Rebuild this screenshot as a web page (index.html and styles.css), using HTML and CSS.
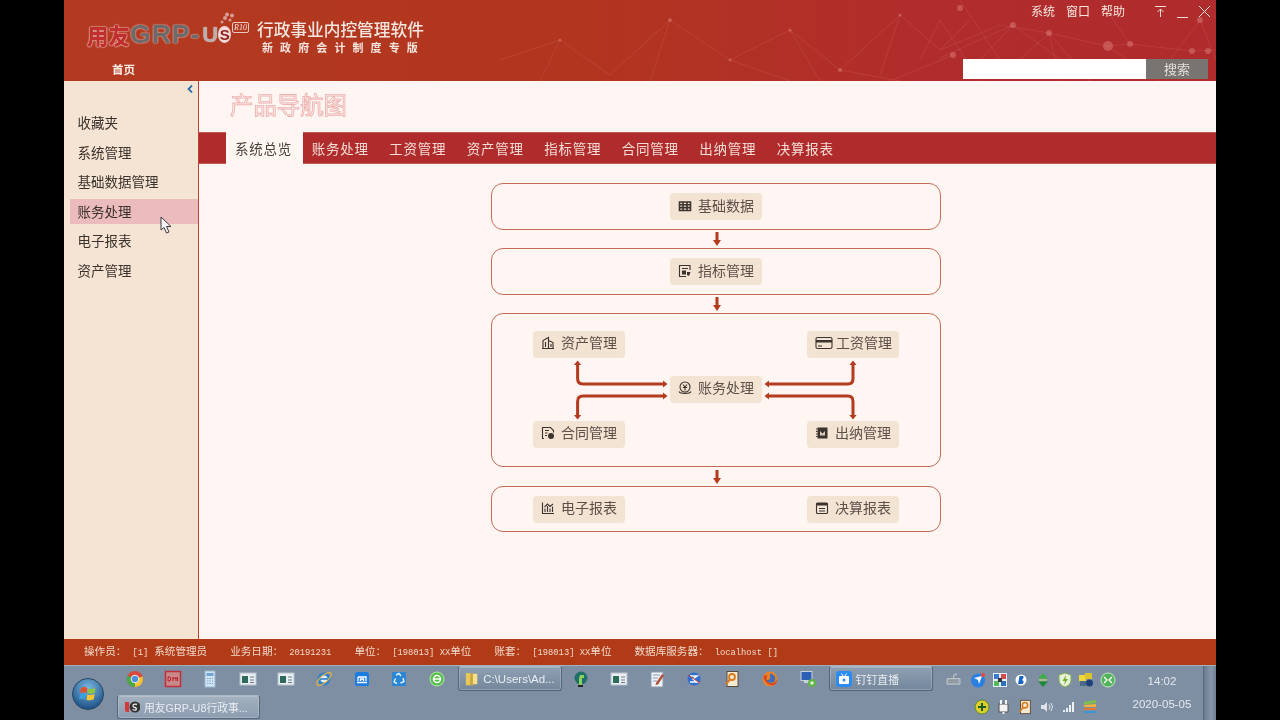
FILE: index.html
```html
<!DOCTYPE html>
<html lang="zh">
<head>
<meta charset="utf-8">
<title>用友GRP-U8</title>
<link rel="stylesheet" href="styles.css">
</head>
<body>
<div class="screen">
  <header class="header">
    <svg class="net" viewBox="0 0 716 81" aria-hidden="true">
      <g class="net-lines">
        <path d="M0 60 L60 40 L110 75 L170 20 L230 60 L290 30 L340 70 L400 15 L440 50 L500 25 L549 33 L590 81 L513 25 L470 70"/>
        <path d="M60 40 L40 81 M170 20 L150 81 M230 60 L290 81 M290 30 L320 81 M340 70 L400 81 M400 15 L380 75 M440 50 L470 20 M440 58 L513 25 M549 33 L520 60 M549 33 L560 81"/>
        <path d="M549 33 L607 46 L630 44 L692 51 L716 50 M700 20 L670 60 M700 20 L716 60 M460 0 L500 60 M630 44 L600 0 M607 46 L660 81 M420 60 L440 20 L480 81 M453 55 L390 81"/>
      </g>
      <g class="net-dots">
        <circle cx="60" cy="40" r="1.5"/><circle cx="170" cy="20" r="2"/><circle cx="230" cy="60" r="1.5"/><circle cx="290" cy="30" r="1.5"/><circle cx="340" cy="70" r="2"/><circle cx="400" cy="15" r="1.5"/><circle cx="460" cy="8" r="3"/><circle cx="453" cy="55" r="3"/><circle cx="513" cy="25" r="3"/><circle cx="549" cy="33" r="3"/><circle cx="608" cy="46" r="5"/><circle cx="630" cy="44" r="3"/><circle cx="700" cy="20" r="3"/><circle cx="692" cy="51" r="3"/><circle cx="708" cy="51" r="3"/>
      </g>
    </svg>
    <div class="header-top">
      <div class="brand">
        <div class="logo">
          <span class="logo-cn">用友</span><span class="logo-en">GRP-</span><span class="logo-u">U</span><span class="logo-s">S</span><span class="logo-r">R10</span>
          <svg class="logo-dots" width="16" height="12" viewBox="0 0 16 12" aria-hidden="true"><circle cx="3" cy="10" r="1.500"/><circle cx="6" cy="6" r="2"/><circle cx="8" cy="2.500" r="2"/><circle cx="13" cy="3.500" r="2"/><circle cx="11" cy="8" r="1.500"/></svg>
        </div>
        <div class="brand-text">
          <div class="brand-main">行政事业内控管理软件</div>
          <div class="brand-sub">新政府会计制度专版</div>
        </div>
      </div>
      <div class="sysmenu">
        <span>系统</span><span>窗口</span><span>帮助</span>
        <div class="winctl">
          <svg width="13" height="13" viewBox="0 0 13 13"><path d="M1 1.500H12M6.500 12V4M3.500 7L6.500 4L9.500 7"/></svg>
          <svg width="13" height="13" viewBox="0 0 13 13"><path d="M1 12.500H12"/></svg>
          <svg width="13" height="13" viewBox="0 0 13 13"><path d="M1 1L12 12M12 1L1 12"/></svg>
        </div>
      </div>
    </div>
    <div class="header-nav">
      <span class="home">首页</span>
      <div class="search"><div class="search-input"></div><div class="search-btn">搜索</div></div>
    </div>
  </header>

  <main class="body">
    <aside class="sidebar">
      <div class="collapse"><svg width="6" height="8" viewBox="0 0 6 8"><path d="M5 .5L1.500 4L5 7.500"/></svg></div>
      <ul class="menu">
        <li>收藏夹</li>
        <li>系统管理</li>
        <li>基础数据管理</li>
        <li class="active">账务处理</li>
        <li>电子报表</li>
        <li>资产管理</li>
      </ul>
    </aside>

    <section class="content">
      <h1 class="title">产品导航图</h1>
      <nav class="tabs">
        <span class="tab current">系统总览</span>
        <span class="tab">账务处理</span>
        <span class="tab">工资管理</span>
        <span class="tab">资产管理</span>
        <span class="tab">指标管理</span>
        <span class="tab">合同管理</span>
        <span class="tab">出纳管理</span>
        <span class="tab">决算报表</span>
      </nav>

      <div class="flow">
        <div class="box single">
          <div class="chip"><svg class="ic" viewBox="0 0 14 14"><path d="M1.500 3H12.500V11.500H1.500ZM1.500 5.800H12.500M1.500 8.600H12.500M5 3V11.500M9 3V11.500" stroke-width="1.600"/></svg><span>基础数据</span></div>
        </div>
        <div class="down"><svg width="8" height="14" viewBox="0 0 8 14"><path d="M2.500 0H5.500V8H8L4 14L0 8H2.500Z"/></svg></div>
        <div class="box single">
          <div class="chip"><svg class="ic" viewBox="0 0 14 14"><path d="M12 6V1.500H1.500V12.500H8M4 4.500H10"/><path class="solid" d="M4 6.500H8V10.500H4ZM9 8L12.500 8L11 12L9 11Z"/></svg><span>指标管理</span></div>
        </div>
        <div class="down"><svg width="8" height="14" viewBox="0 0 8 14"><path d="M2.500 0H5.500V8H8L4 14L0 8H2.500Z"/></svg></div>
        <div class="box hub">
          <svg class="links" viewBox="0 0 450 154" aria-hidden="true">
            <path class="link" d="M174 71H92Q86.600 71 86.600 65.500V50"/>
            <path class="link" d="M174 83H92Q86.600 83 86.600 88.500V104"/>
            <path class="link" d="M276 71H357Q362 71 362 65.500V50"/>
            <path class="link" d="M276 83H357Q362 83 362 88.500V104"/>
            <path class="head" d="M172 67.500L176.500 71L172 74.500ZM172 79.500L176.500 83L172 86.500ZM278 67.500L273.500 71L278 74.500ZM278 79.500L273.500 83L278 86.500ZM83 52L86.600 47.500L90.200 52ZM83 102L86.600 106.500L90.200 102ZM358.400 52L362 47.500L365.600 52ZM358.400 102L362 106.500L365.600 102Z"/>
          </svg>
          <div class="chip"><svg class="ic" viewBox="0 0 14 14"><path d="M2 12.500V4.500L7.500 1.500V12.500M7.500 4.500L12 6.500V12.500M1 12.500H13M4.500 6V11M10 8V11"/></svg><span>资产管理</span></div>
          <div class="gap"></div>
          <div class="chip"><svg class="ic wide" viewBox="0 0 18 14"><rect x="1" y="1.500" width="16" height="11" rx="1.500"/><path class="solid" d="M1 4H17V6.500H1Z"/><path d="M3 10H7"/></svg><span class="tight">工资管理</span></div>
          <div class="gap"></div>
          <div class="chip"><svg class="ic" viewBox="0 0 14 14"><circle cx="7" cy="6" r="5"/><path d="M5 3.500L7 6L9 3.500M4.800 6.500H9.200M7 6V9.500M1 10.500C2 13 12 13 13 10.500"/></svg><span>账务处理</span></div>
          <div class="gap"></div>
          <div class="chip"><svg class="ic" viewBox="0 0 14 14"><path d="M3 12.500H1.500V1.500H9.500L12.500 4.500V6.500M4 4.500H8M4 7H6.500M4 9.500H6"/><circle class="solid" cx="10" cy="10" r="3"/></svg><span>合同管理</span></div>
          <div class="gap"></div>
          <div class="chip"><svg class="ic" viewBox="0 0 14 14"><path class="solid" d="M2.500 1.500H12.500V12.500H2.500Z"/><path class="thin-light" d="M5 5L7.500 7.500L10 5V9.500H5Z"/><path d="M1 3H2.500M1 5.500H2.500M1 8H2.500M1 10.500H2.500"/></svg><span>出纳管理</span></div>
        </div>
        <div class="down last"><svg width="8" height="14" viewBox="0 0 8 14"><path d="M2.500 0H5.500V8H8L4 14L0 8H2.500Z"/></svg></div>
        <div class="box pair">
          <div class="chip"><svg class="ic" viewBox="0 0 14 14"><path d="M1.500 1.500V12.500H13M4 11V7.500M6.500 11V5M9 11V7.500M11.500 11V5.500M3.500 6L6.500 3L9 5.500L12 3"/></svg><span>电子报表</span></div>
          <div class="chip"><svg class="ic" viewBox="0 0 14 14"><rect x="1.500" y="2" width="11" height="10.500" rx="1"/><path class="solid" d="M1.500 2H12.500V4.500H1.500Z"/><path d="M4 7.500H10M4 10H10"/></svg><span>决算报表</span></div>
        </div>
      </div>
    </section>
  </main>

  <footer class="status">
    <span>操作员：<i class="mid">[1]</i>系统管理员</span>
    <span>业务日期：<i>20191231</i></span>
    <span>单位：<i>[198013] XX</i>单位</span>
    <span>账套：<i>[198013] XX</i>单位</span>
    <span>数据库服务器：<i>localhost []</i></span>
  </footer>

  <div class="taskbar">
    <div class="start">
      <svg class="orb" width="32" height="32" viewBox="0 0 32 32">
        <defs><radialGradient id="orbfill" cx=".5" cy=".3" r=".8"><stop offset="0" stop-color="#7ab8e0"/><stop offset="1" stop-color="#0c3f78"/></radialGradient></defs>
        <circle cx="16" cy="16" r="15.500" fill="url(#orbfill)" stroke="#2c4660"/>
        <path d="M9 10Q12 8 15.300 10L14.500 15Q11.500 13.500 8.200 15Z" fill="#e0502a"/>
        <path d="M16.300 10.500Q20 12 23.500 9.500L22.800 14.800Q19 16.500 15.500 15.300Z" fill="#8dc63f"/>
        <path d="M8 16.200Q11.500 14.800 14.300 16.300L13.500 21.500Q10.500 19.800 7.200 21.300Z" fill="#3aa0e0"/>
        <path d="M15.300 16.500Q19 17.800 22.600 16L21.800 21.300Q18 23 14.500 21.700Z" fill="#f8c52c"/>
      </svg>
    </div>
    <div class="task-main">
      <div class="task-row">
        <span class="qi"><svg viewBox="0 0 18 18"><circle cx="9" cy="9" r="8" fill="#d8483a"/><path d="M9 9L16.500 6.500A8 8 0 0 1 9 17Z" fill="#f4c430"/><path d="M9 9L9 17A8 8 0 0 1 1.500 5.500Z" fill="#4da64a"/><circle cx="9" cy="9" r="3.800" fill="#4a8fdc" stroke="#eee"/></svg></span>
        <span class="qi"><svg viewBox="0 0 18 18"><rect x="1.500" y="1.500" width="15" height="15" fill="#c9898a" stroke="#c22f3a" stroke-width="1.500"/><path d="M4 11V7H6Q7.500 9 6 11ZM9 11V7L10.500 9L12 7V11M13.500 7V11" fill="none" stroke="#b8202a"/></svg></span>
        <span class="qi"><svg viewBox="0 0 18 18"><rect x="4" y="1" width="10" height="16" fill="#cfe4f5" stroke="#9db8d0"/><rect x="5.500" y="3" width="7" height="3" fill="#6fa6d8"/><path d="M6 8.500H12M6 11H12M6 13.500H12" stroke="#7ea5c8" stroke-dasharray="1.500 1"/></svg></span>
        <span class="qi"><svg viewBox="0 0 18 18"><use href="#winapp"/></svg></span>
        <span class="qi"><svg viewBox="0 0 18 18"><use href="#winapp"/></svg></span>
        <span class="qi"><svg viewBox="0 0 18 18"><ellipse cx="9" cy="9" rx="6.500" ry="6.500" fill="#2f80d0"/><circle cx="9" cy="9" r="3.500" fill="#e8f2fa"/><path d="M5 9H13" stroke="#2f80d0" stroke-width="1.600"/><ellipse cx="9" cy="9" rx="9" ry="3.500" transform="rotate(-40 9 9)" fill="none" stroke="#e5b53c" stroke-width="1.200"/></svg></span>
        <span class="qi"><svg viewBox="0 0 18 18"><rect x="2" y="2" width="14" height="14" rx="2.500" fill="#1c7ce0"/><path d="M5 7H13V11M5 7V11M7.500 11V9H10.500V11M4 12.500H14" fill="none" stroke="#fff" stroke-width="1.300"/></svg></span>
        <span class="qi"><svg viewBox="0 0 18 18"><rect x="2" y="2" width="14" height="14" rx="1" fill="#2b86d4"/><path d="M6 5L9 3.500L11 6M13 8L14 11.500L10.500 13M7 13.500L4 12L5.500 8.500" fill="none" stroke="#dff0fb" stroke-width="1.400"/></svg></span>
        <span class="qi"><svg viewBox="0 0 18 18"><circle cx="9" cy="9" r="7" fill="#55c04a" stroke="#b9e7b0"/><circle cx="9" cy="9" r="3.500" fill="none" stroke="#fff" stroke-width="1.500"/><path d="M5 9H13" stroke="#fff" stroke-width="1.500"/></svg></span>
        <div class="task-btn path"><svg viewBox="0 0 16 18" width="14" height="18"><path d="M1 2H6V16H1Z" fill="#e8c65a"/><path d="M6 3H14V15H6Z" fill="#f6e08c"/><path d="M6 2L9 3V17L6 16Z" fill="#caa33a"/></svg><span>C:\Users\Ad...</span></div>
        <span class="qi"><svg viewBox="0 0 18 18"><circle cx="9" cy="8" r="6.500" fill="#1f6f6a"/><path d="M8 5H12V8H10V15H7V8Z" fill="#8ccf5e"/><path d="M6 15H11V17H6Z" fill="#222"/></svg></span>
        <span class="qi"><svg viewBox="0 0 18 18"><use href="#winapp"/></svg></span>
        <span class="qi"><svg viewBox="0 0 18 18"><rect x="3" y="2" width="12" height="15" fill="#eef3f8" stroke="#8a9ab0"/><path d="M5 5H12M5 8H10M5 11H9" stroke="#8a9ab0"/><path d="M8 13L14 4L16 5.500L10 14.500L7.500 15Z" fill="#b0503a"/></svg></span>
        <span class="qi"><svg viewBox="0 0 18 18"><circle cx="9" cy="9" r="6.500" fill="#2f6fd0"/><path d="M5 6H12L8 9L12 12H5" fill="none" stroke="#fff" stroke-width="1.500"/><path d="M3 5L15 13" stroke="#c53a3a"/></svg></span>
        <span class="qi"><svg viewBox="0 0 18 18"><use href="#keydoc"/></svg></span>
        <span class="qi"><svg viewBox="0 0 18 18"><circle cx="9" cy="9" r="7.500" fill="#e8822a"/><path d="M9 3.500A5.500 5.500 0 0 1 14 11C11 14 6 13 5 9.500C6.500 10.500 9 10 9 8Z" fill="#3f6cb5"/><path d="M2.500 6C3 12 8 16 13 15C15 14 16.500 11 16.500 8.500C15.500 13 10 14.500 7 12C5 10 5 7 6.500 5Z" fill="#d8441f"/></svg></span>
        <span class="qi"><svg viewBox="0 0 18 18"><rect x="2" y="1.500" width="11" height="9" fill="#2d5fb5" stroke="#c8d2dc"/><rect x="5" y="11" width="5" height="2" fill="#c8d2dc"/><circle cx="13" cy="13" r="4" fill="#5fb545"/><path d="M11 13H15M13 11V15" stroke="#fff"/></svg></span>
        <div class="task-btn"><svg viewBox="0 0 16 16" width="16" height="16"><rect width="16" height="16" rx="3" fill="#2d8cf0"/><rect x="3" y="5" width="10" height="8" rx="1" fill="#fff"/><path d="M5.500 2.500L7 5M10.500 2.500L9 5" stroke="#fff"/><circle cx="8" cy="9" r="1.500" fill="#2d8cf0"/></svg><span>钉钉直播</span></div>
      </div>
      <div class="task-row second">
        <div class="task-btn app"><svg viewBox="0 0 16 16" width="16" height="16"><path d="M1 3H5V13H3Q1 13 1 11Z" fill="#d43a3a"/><circle cx="11" cy="8" r="5.500" fill="#333"/><path d="M13 5.500Q9 4.500 9 7Q9 8.500 11 8.500Q13 9 12 11Q10.500 11.500 8.500 10.500" fill="none" stroke="#eee" stroke-width="1.300"/></svg><span>用友GRP-U8行政事...</span></div>
      </div>
    </div>
    <div class="tray">
      <div class="tray-row">
        <span class="tk"><svg viewBox="0 0 16 14" width="15" height="13"><path d="M1 6H15V12H1ZM8 6V3Q8 1 12 1" fill="#9aa3ac" stroke="#c2c8ce"/><path d="M3 8H13M3 10H13" stroke="#7d8790" stroke-dasharray="1 1"/></svg></span>
        <span class="ti"><svg viewBox="0 0 16 16"><circle cx="8" cy="8.500" r="7" fill="#2a7fe0"/><path d="M4 6L12 4L9 12L8 8Z" fill="#fff"/><circle cx="13" cy="3" r="2" fill="#e8453c"/></svg></span>
        <span class="ti"><svg viewBox="0 0 16 16"><rect x="1" y="1" width="14" height="14" fill="#e8eef5"/><rect x="2" y="2" width="5" height="5" fill="#3a7ad8"/><rect x="9" y="2" width="5" height="5" fill="#d84a4a"/><rect x="2" y="9" width="5" height="5" fill="#4fbf5a"/><rect x="9" y="9" width="5" height="5" fill="#2d6fb8"/><rect x="6" y="6" width="4" height="4" fill="#333"/></svg></span>
        <span class="ti"><svg viewBox="0 0 16 16"><circle cx="8" cy="8" r="5.500" fill="#fff"/><path d="M5 12L6.500 4H10Q11.500 5.500 9 8Q12 9 9.500 12Z" fill="#1a62c8"/></svg></span>
        <span class="ti"><svg viewBox="0 0 16 16"><path d="M8 1L13 6.500H3Z" fill="#3eb04a"/><path d="M8 15L13 9.500H3Z" fill="#1d8a3a"/><path d="M4 7.500H12V8.500H4Z" fill="#d9e36a"/></svg></span>
        <span class="ti"><svg viewBox="0 0 16 16"><path d="M8 1L14 3V8Q14 13 8 15Q2 13 2 8V3Z" fill="#e8f0d8" stroke="#7eb050"/><path d="M9 3L5.500 9H8L7 13L11 7H8.500Z" fill="#6cb030"/></svg></span>
        <span class="ti"><svg viewBox="0 0 16 16"><rect x="1" y="3" width="7" height="6" fill="#f0d83a"/><rect x="7" y="1" width="7" height="6" fill="#dcc22c"/><rect x="2" y="9" width="6" height="5" fill="#4c6a8a"/><circle cx="11.500" cy="11" r="3.500" fill="#1f3f7a"/></svg></span>
        <span class="ti"><svg viewBox="0 0 16 16"><circle cx="8" cy="8" r="7" fill="#52b45a" stroke="#c3e6c2"/><path d="M4 5L7 8L4 11M12 5L9 8L12 11" fill="none" stroke="#fff" stroke-width="1.300"/></svg></span>
      </div>
      <div class="tray-row second-tray">
        <span class="ti"><svg viewBox="0 0 16 16"><circle cx="8" cy="8" r="7" fill="#dccf2c" stroke="#5a8a2c"/><path d="M8 4V12M4 8H12" stroke="#1f5a2a" stroke-width="2"/></svg></span>
        <span class="ti"><svg viewBox="0 0 16 16"><rect x="3" y="5" width="9" height="8" fill="#f2f2f2" stroke="#555"/><path d="M5 5V1M10 5V1M7.500 13V15" stroke="#f2f2f2" stroke-width="2"/></svg></span>
        <span class="ti"><svg viewBox="0 0 16 16"><use href="#keydoc"/></svg></span>
        <span class="ti"><svg viewBox="0 0 16 16"><path d="M2 6H5L8 3V13L5 10H2Z" fill="#dfe4ea"/><path d="M10 5.500Q12 8 10 10.500M12 4Q15 8 12 12" fill="none" stroke="#dfe4ea"/></svg></span>
        <span class="ti"><svg viewBox="0 0 16 16"><path d="M2 13V11H4V13ZM5 13V9H7V13ZM8 13V6H10V13ZM11 13V3H13V13Z" fill="#eef1f4"/></svg></span>
        <span class="ti"><svg viewBox="0 0 16 16"><path d="M2 3L14 1V4L2 5.500Z" fill="#7fc04a"/><path d="M2 6L14 5V8H2Z" fill="#eeb23a"/><path d="M2 9H14V11H2Z" fill="#e0783a"/><path d="M2 12H14V14H2Z" fill="#3a96d8"/></svg></span>
      </div>
    </div>
    <div class="clock"><span>14:02</span><span>2020-05-05</span></div>
    <div class="show-desktop"></div>
  </div>

  <svg class="cursor" width="13" height="18" viewBox="0 0 13 18"><path d="M1 1V14L4 11.500L6.500 17L9 16L6.500 10.500H11Z" fill="#f4f4f4" stroke="#3a3a4a"/></svg>

  <svg class="defs" width="0" height="0" aria-hidden="true">
    <symbol id="winapp" viewBox="0 0 18 18"><rect x="1" y="3" width="16" height="12" fill="#e9eef2" stroke="#b8c2cc"/><rect x="3" y="6" width="6" height="7" fill="#2c6a5a"/><path d="M11 7H15M11 10H15M11 12.500H15" stroke="#6a7a88"/></symbol>
    <symbol id="keydoc" viewBox="0 0 18 18"><rect x="4" y="1.500" width="11" height="15" fill="#f5ead0" stroke="#5a4a3a"/><circle cx="9" cy="7" r="3" fill="none" stroke="#d87a20" stroke-width="1.800"/><path d="M7 9.500L3 14" stroke="#d87a20" stroke-width="2"/></symbol>
  </svg>
</div>
</body>
</html>
```
FILE: styles.css
```css
* { box-sizing: border-box; }
html, body { margin: 0; padding: 0; height: 100%; background: #000; overflow: hidden; }
body { font-family: "Noto Sans CJK SC", "Liberation Sans", sans-serif; }

.screen {
  position: relative;
  width: 1152px;
  height: 720px;
  margin-left: 64px;
  display: flex;
  flex-direction: column;
  filter: blur(0.35px);
}

/* header */
.header {
  position: relative;
  height: 81px;
  flex: none;
  background: linear-gradient(90deg, #b33a20 0%, #b2351f 45%, #b12c2c 75%, #b02b2c 100%);
  color: #f4e6df;
}
.net { position: absolute; right: 0; top: 0; width: 716px; height: 81px; }
.net-lines path { fill: none; stroke: rgba(255, 190, 180, .11); stroke-width: 1; }
.net-dots circle { fill: rgba(255, 190, 180, .28); }

.header-top { position: relative; height: 58px; display: flex; justify-content: space-between; align-items: flex-start; }
.brand { display: flex; padding: 12px 0 0 23px; }
.logo { width: 170px; height: 36px; display: flex; align-items: center; padding-top: 9px; font-family: "Liberation Sans", sans-serif; font-weight: 700; position: relative; white-space: nowrap; }
.logo-cn { font-family: "Noto Sans CJK SC", sans-serif; font-size: 21.500px; font-weight: 900; color: #c02e2e; text-shadow: 0 0 1.500px #fbe3dc, 0 0 1.500px #fbe3dc; line-height: 1; }
.logo-en { font-size: 26.500px; letter-spacing: 1px; color: #6f6a69; -webkit-text-stroke: .3px #6f6a69; text-shadow: 0 0 1.500px #f6cfc6, 0 0 1.500px #f6cfc6; line-height: 1; }
.logo-u { margin-left: 2px; font-size: 22px; color: #b9b0ae; text-shadow: 0 0 1px #f6cfc6; line-height: 1; }
.logo-s { width: 13px; height: 17px; border-radius: 50%; background: #f2dada; color: #8f2222; font-size: 15px; line-height: 17px; text-align: center; }
.logo-r { position: absolute; left: 145px; top: 10px; padding: 0 1px; border: 1px solid #e8c8c0; border-radius: 2px; font: italic 8px/9px "Liberation Serif", serif; color: #f4e6df; }
.logo-dots { position: absolute; left: 132px; top: 0; fill: #d89c94; }
.brand-text { padding-top: 5px; }
.brand-main { font-size: 16.700px; font-weight: 500; line-height: 24px; white-space: nowrap; }
.brand-sub { padding-left: 5px; font-size: 11px; font-weight: 700; letter-spacing: 7.100px; line-height: 13px; white-space: nowrap; }

.sysmenu { display: flex; align-items: center; gap: 11px; font-size: 12px; line-height: 20px; padding-top: 1px; padding-right: 5px; }
.winctl { display: flex; gap: 9px; margin-left: 18px; }
.winctl svg { fill: none; stroke: #f0dcd6; stroke-width: 1; }

.header-nav { position: relative; height: 23px; display: flex; justify-content: space-between; align-items: flex-start; padding: 1px 8px 0 48px; }
.home { font-size: 11.500px; font-weight: 700; line-height: 20px; color: #f8ece6; }
.search { display: flex; height: 20px; }
.search-input { width: 183px; background: #fff; }
.search-btn { width: 62px; background: #787472; color: #e2dedc; font-size: 13px; line-height: 19px; text-align: center; }

/* body */
.body { flex: 1; min-height: 0; display: flex; background: #fff5f3; }
.sidebar { width: 135px; flex: none; background: #f5e3d3; border-right: 1px solid #b5472f; }
.collapse { height: 25px; display: flex; justify-content: flex-end; padding: 4px 5px 0 0; }
.collapse svg { fill: none; stroke: #2a6fa8; stroke-width: 1.800; }
.menu { list-style: none; margin: 0 0 0 6px; padding: 4px 0 0; }
.menu li { height: 25px; margin-bottom: 4.600px; padding-left: 7.500px; font-size: 13.500px; line-height: 24px; color: #3a322c; }
.menu li.active { background: #ecbcbc; }

.content { flex: 1; min-width: 0; display: flex; flex-direction: column; }
.title {
  height: 51px;
  margin: 0;
  padding-left: 31px;
  font-size: 23.400px;
  line-height: 46px;
  font-weight: 400;
  color: #fff5f3;
  -webkit-text-stroke: .9px #edb4b0;
}
.tabs { height: 32px; flex: none; display: flex; padding-left: 27px; background: #b02c2c; border-top: 1px solid #c05a55; border-bottom: 1px solid #c25c58; }
.tab { width: 77.500px; padding-right: 3px; text-align: center; font-size: 13.500px; letter-spacing: .7px; line-height: 31px; color: #f3dcd6; white-space: nowrap; }
.tab.current { background: #fff5f3; color: #4a4038; margin: -1px 0 -1px; padding-right: 2px; line-height: 33px; width: 77px; }

/* diagram */
.flow { width: 450px; margin: 19px 0 0 292px; }
.box { position: relative; border: 1.300px solid #c46c58; border-radius: 12px; display: grid; grid-template-columns: repeat(3, 92px); column-gap: 45px; justify-content: center; align-content: center; }
.box.single { height: 47px; grid-template-columns: 92px; }
.box.hub { height: 154px; padding-bottom: 1.300px; grid-template-rows: repeat(3, 27px); row-gap: 18px; }
.box.pair { height: 46px; grid-template-columns: 92px 92px; column-gap: 182px; }
.chip { position: relative; height: 27px; width: 92px; padding: 0 0 2px 8px; background: #f3e3d3; border-radius: 4px; display: flex; align-items: center; gap: 6px; color: #5c5049; font-size: 14px; white-space: nowrap; }
.chip span { margin-bottom: 2px; }
.chip span.tight { margin-left: -3px; }
.ic { width: 14px; height: 14px; flex: none; fill: none; stroke: #3b332e; stroke-width: 1.100; }
.ic.wide { width: 18px; }
.ic .solid { fill: #3b332e; stroke: none; }
.ic .thin-light { fill: #d9cabc; stroke: none; }

.down { height: 18px; padding-left: 2px; display: flex; justify-content: center; align-items: center; }
.down.last { height: 19px; }
.down svg { fill: #b33c1e; }

.links { position: absolute; left: -1.300px; top: -1.300px; width: 450px; height: 154px; }
.link { fill: none; stroke: #b33c1e; stroke-width: 3; }
.head { fill: #b33c1e; }

/* status */
.status { height: 26px; flex: none; padding: 0 0 3px 20px; display: flex; gap: 23px; align-items: center; background: #b23b17; color: #f0d9cc; font-size: 10.600px; white-space: nowrap; }
.status i { margin-left: 6px; font: 8.800px "Liberation Mono", monospace; }
.status i.mid { margin-right: 6px; }

/* taskbar */
.taskbar { height: 55px; flex: none; display: flex; background: #7e8fa3; border-top: 1px solid #a3b0bf; color: #e8edf2; }
.start { width: 48px; padding: 12px 0 0 8px; flex: none; }
.orb { display: block; }
.task-main { width: 824px; flex: none; }
.task-row { height: 28px; display: flex; align-items: flex-start; padding-left: 4px; }
.task-row.second { height: 27px; padding: 1px 0 0 5px; }
.qi { width: 37.800px; height: 25px; flex: none; display: flex; align-items: center; justify-content: center; }
.qi svg { width: 18px; height: 18px; }
.task-btn { width: 104px; height: 25px; flex: none; display: flex; align-items: center; gap: 4px; padding-left: 6px; border: 1px solid #55667a; border-top-color: #aab7c5; border-radius: 3px; background: linear-gradient(#8fa0b3, #74869b); box-shadow: inset 0 0 0 1px rgba(255, 255, 255, .2); font-family: "Liberation Sans", "Noto Sans CJK SC", sans-serif; font-size: 10.800px; white-space: nowrap; overflow: hidden; margin-left: 2px; }
.task-btn.path { font-size: 11.500px; }
.task-btn.app { width: 143px; height: 24px; margin-left: 0; background: linear-gradient(#a3b1c0, #8d9db0); }
.tray { width: 183px; flex: none; margin-left: 4px; }
.tray-row { height: 27px; display: flex; align-items: center; }
.second-tray { padding-left: 31px; }
.tk { width: 28px; display: flex; justify-content: center; margin-left: -1px; }
.ti { width: 21.700px; flex: none; display: flex; justify-content: center; }
.ti svg { width: 16px; height: 16px; }
.clock { position: absolute; left: 1058px; bottom: 0; width: 80px; height: 55px; display: flex; flex-direction: column; justify-content: space-between; align-items: center; padding: 9px 0 8px; font: 11.500px/15px "Liberation Sans", sans-serif; color: #e4e9ef; }
.show-desktop { position: absolute; right: 0; bottom: 0; width: 13px; height: 54px; background: linear-gradient(90deg, #6c7b8d, #8797a9 60%, #6f7f92); border-left: 1px solid #5a6979; }

.cursor { position: absolute; left: 96px; top: 216px; }
.defs { position: absolute; }
```
